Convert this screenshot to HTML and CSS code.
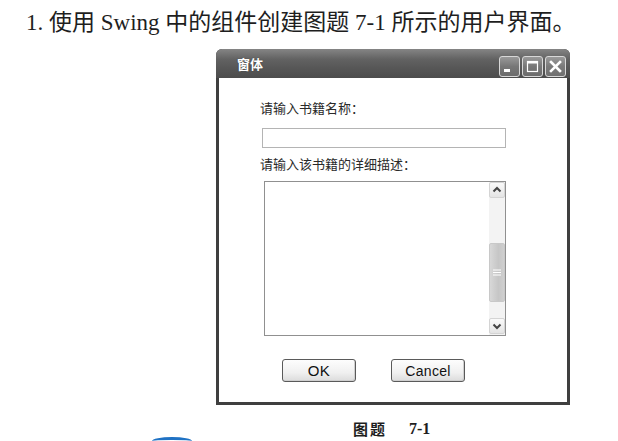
FILE: index.html
```html
<!DOCTYPE html>
<html lang="zh">
<head>
<meta charset="utf-8">
<title>图题 7-1</title>
<link rel="stylesheet" href="styles.css">
</head>
<body>
<p class="question">1. 使用 Swing 中的组件创建图题 7-1 所示的用户界面。</p>
<div class="window">
  <div class="titlebar">
    <span class="title">窗体</span>
    <div class="controls">
      <span class="ctl"><svg width="19" height="19" viewBox="0 0 19 19"><rect x="4" y="12" width="6" height="3" fill="#fff"/></svg></span>
      <span class="ctl"><svg width="19" height="19" viewBox="0 0 19 19"><rect x="4.5" y="4.5" width="10" height="10" fill="none" stroke="#fff" stroke-width="1.2"/><rect x="4" y="4" width="11" height="2.5" fill="#fff"/></svg></span>
      <span class="ctl"><svg width="19" height="19" viewBox="0 0 19 19"><path d="M5 5 L14 14 M14 5 L5 14" stroke="#fff" stroke-width="2.6" stroke-linecap="square"/></svg></span>
    </div>
  </div>
  <div class="content">
    <div class="label">请输入书籍名称：</div>
    <div class="field"></div>
    <div class="label label2">请输入该书籍的详细描述：</div>
    <div class="area">
      <div class="scroll">
        <span class="arrow"><svg width="14" height="14" viewBox="0 0 14 14"><path d="M3.5 8.5 L7 5 L10.5 8.5" fill="none" stroke="#444" stroke-width="2"/></svg></span>
        <span class="thumb"><svg width="8" height="7" viewBox="0 0 8 7"><path d="M0 1h8M0 3.5h8M0 6h8" stroke="#fff" stroke-width="1"/></svg></span>
        <span class="arrow down"><svg width="14" height="14" viewBox="0 0 14 14"><path d="M3.5 5.5 L7 9 L10.5 5.5" fill="none" stroke="#444" stroke-width="2"/></svg></span>
      </div>
    </div>
    <div class="buttons">
      <span class="btn ok">OK</span>
      <span class="btn">Cancel</span>
    </div>
  </div>
</div>
<div class="caption"><span class="cap-zh">图题</span><span class="cap-num">7-1</span></div>
<span class="mark"></span>
</body>
</html>
```

FILE: styles.css
```css
html, body {
  margin: 0;
  padding: 0;
}
html {
  overflow: hidden;
}
body {
  width: 618px;
  height: 441px;
  background: #fff;
  overflow: hidden;
  position: relative;
}
.question {
  margin: 0;
  height: 49px;
  box-sizing: border-box;
  padding: 10px 0 0 26px;
  font: 23px/26px "Liberation Serif", "Noto Sans CJK SC", serif;
  color: #1e1e1e;
  white-space: nowrap;
}
.window {
  margin-left: 216px;
  width: 354px;
  height: 356px;
  display: flex;
  flex-direction: column;
  background: #3f3f3f;
  border-radius: 6px 6px 0 0;
}
.titlebar {
  flex: none;
  height: 29px;
  display: flex;
  justify-content: space-between;
  align-items: flex-end;
  padding: 0 4px 1px 21px;
  box-sizing: border-box;
  background: linear-gradient(#858585, #626262 35%, #555 70%, #4c4c4c);
  border-radius: 6px 6px 0 0;
}
.title {
  align-self: center;
  margin-top: 2px;
  color: #fff;
  font: bold 13px/16px "Noto Sans CJK SC", sans-serif;
  text-shadow: 0 0 1px #333;
}
.controls {
  display: flex;
  gap: 2px;
}
.ctl {
  width: 21px;
  height: 21px;
  box-sizing: border-box;
  border: 1px solid #d8d8d8;
  border-radius: 3px;
  background: linear-gradient(#999, #777 50%, #6c6c6c);
  display: flex;
  align-items: center;
  justify-content: center;
}
.ctl:last-child {
  background: linear-gradient(#9a9a9a, #7a7a7a 50%, #707070);
}
.content {
  flex: 1;
  margin: 0 3px 3px;
  background: #fff;
  display: flex;
  flex-direction: column;
  align-items: flex-start;
  padding-top: 22px;
}
.label {
  margin-left: 41px;
  font: 13px/16px "Noto Sans CJK SC", sans-serif;
  color: #2a2a2a;
}
.field {
  margin: 12px 0 0 43px;
  width: 244px;
  height: 20px;
  box-sizing: border-box;
  border: 1px solid #b4b4b4;
  background: #fff;
}
.label2 {
  margin-top: 8px;
}
.area {
  margin: 9px 0 0 45px;
  width: 242px;
  height: 155px;
  box-sizing: border-box;
  border: 1px solid #909090;
  display: flex;
  justify-content: flex-end;
}
.scroll {
  width: 16px;
  background: #f3f3f3;
  display: flex;
  flex-direction: column;
  align-items: center;
  padding: 0 0 1px;
}
.arrow {
  width: 16px;
  height: 16px;
  box-sizing: border-box;
  border: 1px solid #d4d4d4;
  border-radius: 2px;
  background: linear-gradient(#fafafa, #e4e4e4);
  display: flex;
  align-items: center;
  justify-content: center;
}
.thumb {
  margin-top: 45px;
  width: 16px;
  height: 59px;
  box-sizing: border-box;
  border: 1px solid #c8c8c8;
  border-radius: 2px;
  background: linear-gradient(90deg, #d8d8d8, #c6c6c6 60%, #cfcfcf);
  display: flex;
  align-items: center;
  justify-content: center;
}
.down {
  margin-top: auto;
}
.buttons {
  margin: 23px 0 0 63px;
  display: flex;
  gap: 35px;
}
.btn {
  width: 74px;
  height: 23px;
  box-sizing: border-box;
  border: 1px solid #5a5a5a;
  border-radius: 3px;
  background: linear-gradient(#fdfdfd, #f0f0f0 60%, #dcdcdc);
  box-shadow: inset -1px -1px 0 #cfcfcf;
  display: flex;
  align-items: center;
  justify-content: center;
  font: 14px/16px "Liberation Sans", sans-serif;
  color: #111;
  letter-spacing: 0.3px;
}
.btn.ok {
  font-size: 15px;
}
.caption {
  margin: 15px 0 0 353px;
  display: flex;
  gap: 22px;
  font: bold 16px/18px "Liberation Serif", "Noto Sans CJK SC", serif;
  color: #1e1e1e;
}
.cap-zh {
  font-family: "Noto Sans CJK SC", sans-serif;
  font-size: 15px;
  letter-spacing: 2px;
}
.mark {
  position: absolute;
  left: 152px;
  top: 437px;
  width: 40px;
  height: 4px;
  box-sizing: border-box;
  border-top: 3px solid #1f72c4;
  border-radius: 50% 50% 0 0 / 100% 100% 0 0;
}
```
